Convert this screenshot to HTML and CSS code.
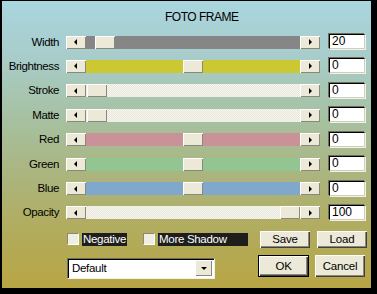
FILE: index.html
```html
<!DOCTYPE html>
<html>
<head>
<meta charset="utf-8">
<link rel="stylesheet" href="styles.css">
</head>
<body>
<div class="dialog">
  <div class="title">FOTO FRAME</div>
  <div class="rows">
    <div class="row">
      <span class="label">Width</span>
      <div class="slider"><span class="btn arrow-l"></span><div class="track t-gray"><span class="btn thumb" style="left:9px"></span></div><span class="btn arrow-r"></span></div>
      <div class="input">20</div>
    </div>
    <div class="row">
      <span class="label">Brightness</span>
      <div class="slider"><span class="btn arrow-l"></span><div class="track t-yellow"><span class="btn thumb" style="left:97px"></span></div><span class="btn arrow-r"></span></div>
      <div class="input">0</div>
    </div>
    <div class="row">
      <span class="label">Stroke</span>
      <div class="slider"><span class="btn arrow-l"></span><div class="track t-check"><span class="btn thumb" style="left:1px"></span></div><span class="btn arrow-r"></span></div>
      <div class="input">0</div>
    </div>
    <div class="row">
      <span class="label">Matte</span>
      <div class="slider"><span class="btn arrow-l"></span><div class="track t-check"><span class="btn thumb" style="left:1px"></span></div><span class="btn arrow-r"></span></div>
      <div class="input">0</div>
    </div>
    <div class="row">
      <span class="label">Red</span>
      <div class="slider"><span class="btn arrow-l"></span><div class="track t-red"><span class="btn thumb" style="left:97px"></span></div><span class="btn arrow-r"></span></div>
      <div class="input">0</div>
    </div>
    <div class="row">
      <span class="label">Green</span>
      <div class="slider"><span class="btn arrow-l"></span><div class="track t-green"><span class="btn thumb" style="left:97px"></span></div><span class="btn arrow-r"></span></div>
      <div class="input">0</div>
    </div>
    <div class="row">
      <span class="label">Blue</span>
      <div class="slider"><span class="btn arrow-l"></span><div class="track t-blue"><span class="btn thumb" style="left:97px"></span></div><span class="btn arrow-r"></span></div>
      <div class="input">0</div>
    </div>
    <div class="row">
      <span class="label">Opacity</span>
      <div class="slider"><span class="btn arrow-l"></span><div class="track t-check"><span class="btn thumb" style="left:194px"></span></div><span class="btn arrow-r"></span></div>
      <div class="input">100</div>
    </div>
  </div>
  <div class="controls-1">
    <span class="checkbox cb-neg"></span><span class="cb-label lbl-neg">Negative</span>
    <span class="checkbox cb-shadow"></span><span class="cb-label lbl-shadow">More Shadow</span>
    <span class="btn push save">Save</span>
    <span class="btn push load">Load</span>
  </div>
  <div class="controls-2">
    <div class="select"><span class="select-text">Default</span><span class="btn select-btn"></span></div>
    <span class="btn push ok">OK</span>
    <span class="btn push cancel">Cancel</span>
  </div>
</div>
</body>
</html>
```
FILE: styles.css
```css
html, body {
  margin: 0;
  padding: 0;
}
body {
  background: #000;
  width: 377px;
  height: 294px;
  overflow: hidden;
  font-family: "Liberation Sans", Arial, sans-serif;
  color: #000;
}
.dialog {
  margin: 1px 6px 0 2px;
  height: 287px;
  background: linear-gradient(to bottom, #a9d6df 0%, #a8cdcc 18%, #a6c09f 42%, #abb47c 62%, #b2ab5a 82%, #b8a645 100%);
}
.title {
  box-sizing: border-box;
  height: 28.8px;
  padding-top: 9px;
  padding-left: 163px;
  font-size: 12px;
  line-height: 14px;
  letter-spacing: -0.5px;
}
.row {
  display: flex;
  align-items: center;
  height: 24.43px;
}
.label {
  width: 57px;
  text-align: right;
  font-size: 11.5px;
  letter-spacing: -0.4px;
  line-height: 13px;
}
.slider {
  display: flex;
  margin-left: 7px;
  width: 254px;
  height: 13px;
}
.btn {
  box-sizing: border-box;
  background: #ece9d8;
  box-shadow: inset 1px 1px #ffffff, inset -1px -1px #8a8878;
}
.arrow-l, .arrow-r {
  width: 20px;
  height: 13px;
  display: flex;
  align-items: center;
  justify-content: center;
}
.arrow-l::before {
  content: "";
  display: block;
  margin-left: -2px;
  border-right: 3px solid #000;
  border-top: 3px solid transparent;
  border-bottom: 3px solid transparent;
}
.arrow-r::before {
  content: "";
  display: block;
  margin-left: 1px;
  border-left: 3px solid #000;
  border-top: 3px solid transparent;
  border-bottom: 3px solid transparent;
}
.track {
  flex: 1;
  position: relative;
}
.thumb {
  position: absolute;
  top: 0;
  width: 20px;
  height: 13px;
}
.t-gray { background: #868686; }
.t-yellow { background: #cbc833; }
.t-red { background: #c99198; }
.t-green { background: #92c592; }
.t-blue { background: #80a8cd; }
.t-check {
  background: repeating-conic-gradient(#e7e6dd 0 25%, #f7f6ef 0 50%) 0 0 / 2px 2px;
}
.input {
  box-sizing: border-box;
  margin-left: 9px;
  width: 36px;
  height: 15px;
  margin-top: -1px;
  background: #fff;
  border-top: 1px solid #000;
  border-left: 1px solid #000;
  border-right: 1px solid #cfcdbf;
  border-bottom: 1px solid #cfcdbf;
  box-shadow: -1px -1px 0 #6d6d5c, 1px 1px 0 #f4f2e6;
  font-size: 12px;
  line-height: 13px;
  padding-left: 2px;
}
.controls-1 {
  display: flex;
  align-items: center;
  height: 17px;
  margin-top: 5.8px;
}
.checkbox {
  box-sizing: border-box;
  width: 12px;
  height: 12px;
  background: #efeee4;
  border-top: 1px solid #8a8878;
  border-left: 1px solid #8a8878;
  border-right: 1px solid #fff;
  border-bottom: 1px solid #fff;
}
.cb-neg { margin-left: 65px; }
.cb-shadow { margin-left: 16px; }
.cb-label {
  box-sizing: border-box;
  height: 13px;
  background: #1e1e1c;
  color: #fff;
  font-size: 11.5px;
  line-height: 13px;
  letter-spacing: -0.3px;
  padding-left: 1px;
  margin-left: 3px;
}
.lbl-neg { width: 45px; }
.lbl-shadow { width: 90px; }
.push {
  display: flex;
  align-items: center;
  justify-content: center;
  font-size: 11.5px;
  letter-spacing: -0.2px;
  box-shadow: inset 1px 1px #ffffff, inset -1px -1px #404040, inset -2px -2px #8a8878;
}
.save {
  margin-left: 12px;
  width: 50px;
  height: 17px;
}
.load {
  margin-left: 7px;
  width: 50px;
  height: 17px;
}
.controls-2 {
  display: flex;
  align-items: flex-start;
  margin-top: 7px;
}
.select {
  box-sizing: border-box;
  margin-left: 65px;
  margin-top: 3px;
  width: 148px;
  height: 21px;
  background: #fff;
  border-top: 1px solid #6d6d5c;
  border-left: 1px solid #6d6d5c;
  border-right: 1px solid #f4f2e6;
  border-bottom: 1px solid #f4f2e6;
  box-shadow: inset 1px 1px #000;
  display: flex;
  align-items: center;
  justify-content: space-between;
  padding: 2px 2px 2px 4px;
}
.select-text {
  font-size: 11.5px;
  letter-spacing: -0.3px;
}
.select-btn {
  width: 17px;
  height: 16px;
  display: flex;
  align-items: center;
  justify-content: center;
}
.select-btn::before {
  content: "";
  display: block;
  border-top: 3px solid #000;
  border-left: 3px solid transparent;
  border-right: 3px solid transparent;
}
.ok {
  margin-left: 43px;
  width: 51px;
  height: 22px;
  box-shadow: inset 0 0 0 1px #000, inset 2px 2px #ffffff, inset -2px -2px #404040, inset -3px -3px #8a8878;
}
.cancel {
  margin-left: 6px;
  width: 50px;
  height: 22px;
}
```
